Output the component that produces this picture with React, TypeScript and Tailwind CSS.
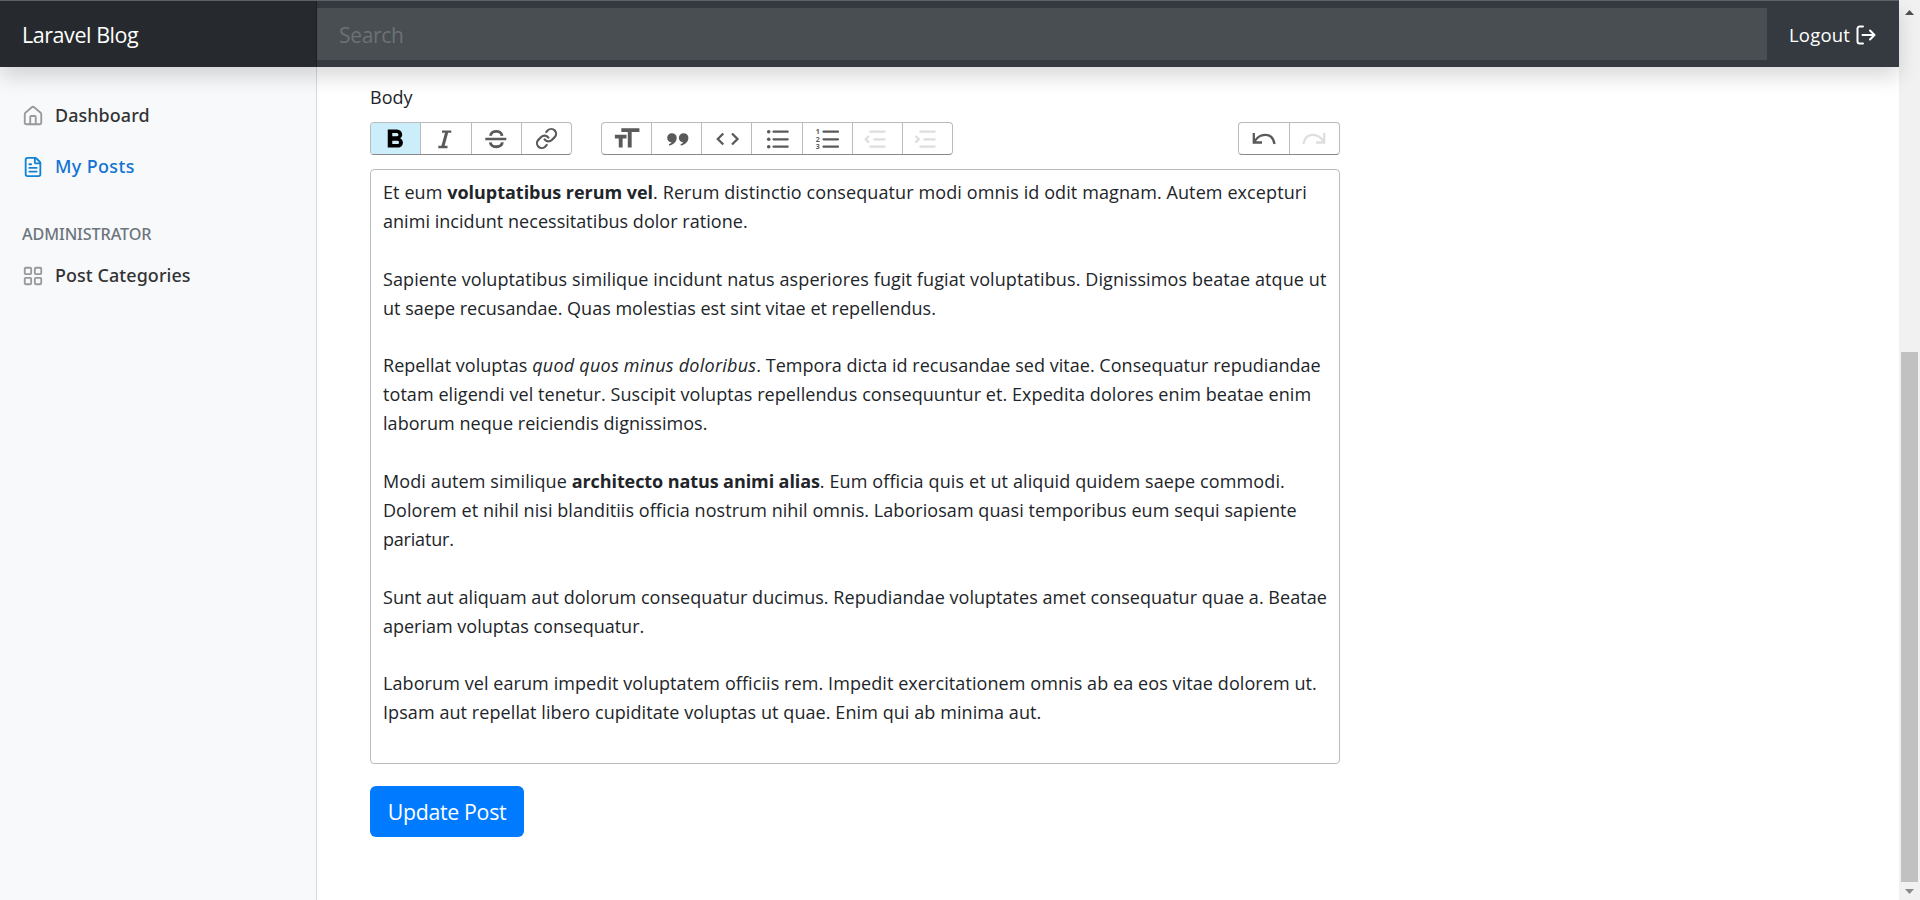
import React from "react";
import { House, FileText, LayoutGrid, Link } from "lucide-react";

const paragraphs: { text: React.ReactNode; cls: string }[][] = [
  [
    { text: <>Et eum <b className="tracking-[-0.03px]">voluptatibus rerum vel</b>. Rerum distinctio consequatur modi omnis id odit magnam. Autem excepturi</>, cls: "tracking-[0.1px]" },
    { text: "animi incidunt necessitatibus dolor ratione.", cls: "tracking-[0.04px]" },
  ],
  [
    { text: "Sapiente voluptatibus similique incidunt natus asperiores fugit fugiat voluptatibus. Dignissimos beatae atque ut", cls: "tracking-[0.1px]" },
    { text: "ut saepe recusandae. Quas molestias est sint vitae et repellendus.", cls: "tracking-[0.01px]" },
  ],
  [
    { text: <>Repellat voluptas <i className="tracking-[0.24px]">quod quos minus doloribus</i>. Tempora dicta id recusandae sed vitae. Consequatur repudiandae</>, cls: "tracking-[0.03px]" },
    { text: "totam eligendi vel tenetur. Suscipit voluptas repellendus consequuntur et. Expedita dolores enim beatae enim", cls: "tracking-[0.07px]" },
    { text: "laborum neque reiciendis dignissimos.", cls: "tracking-[0.05px]" },
  ],
  [
    { text: <>Modi autem similique <b className="tracking-[-0.09px]">architecto natus animi alias</b>. Eum officia quis et ut aliquid quidem saepe commodi.</>, cls: "tracking-[0.11px]" },
    { text: "Dolorem et nihil nisi blanditiis officia nostrum nihil omnis. Laboriosam quasi temporibus eum sequi sapiente", cls: "tracking-[0.057px]" },
    { text: "pariatur.", cls: "tracking-[-0.2px]" },
  ],
  [
    { text: "Sunt aut aliquam aut dolorum consequatur ducimus. Repudiandae voluptates amet consequatur quae a. Beatae", cls: "tracking-[0.04px]" },
    { text: "aperiam voluptas consequatur.", cls: "" },
  ],
  [
    { text: "Laborum vel earum impedit voluptatem officiis rem. Impedit exercitationem omnis ab ea eos vitae dolorem ut.", cls: "tracking-[0.083px]" },
    { text: "Ipsam aut repellat libero cupiditate voluptas ut quae. Enim qui ab minima aut.", cls: "tracking-[0.077px]" },
  ],
];

function Tool({ children, active, disabled }: { children: React.ReactNode; active?: boolean; disabled?: boolean }) {
  return (
    <button className={`flex h-full w-0 min-w-0 flex-1 items-center justify-center border-l border-[#bbb] first:border-l-0 ${active ? "bg-[#cbeefa] text-black" : disabled ? "text-[#dedede]" : "text-[#5a5a5a]"}`}>
      {children}
    </button>
  );
}

function Glyph({ children, w = 2.3 }: { children: React.ReactNode; w?: number }) {
  return (
    <svg viewBox="0 0 50 30" className="h-[30px] w-[50px] shrink-0" fill="none" stroke="currentColor" strokeWidth={w}>
      {children}
    </svg>
  );
}

const groupCls = "flex h-[33px] overflow-hidden rounded-[4px] border border-[#bbb] border-b-[#888] border-b-[1.5px]";

export default function App() {
  return (
    <div className="flex h-[900px] w-full overflow-hidden bg-white font-['Open_Sans','Noto_Sans',sans-serif] text-[#212529]">
      <div className="flex min-w-0 flex-1 flex-col">
        <header className="relative z-10 flex h-[67px] shrink-0 border-t border-[#5d6165] bg-[#343a40] shadow-[0_10px_19px_rgba(0,0,0,0.15)]">
          <div className="flex w-[317px] items-center bg-[#26292d] pl-[22px] pt-[2px] shadow-[inset_-1px_0_0_rgba(0,0,0,0.25)]">
            <span className="whitespace-nowrap text-[21.5px] text-white tracking-[-0.45px]">Laravel Blog</span>
          </div>
          <div className="mt-[7px] flex h-[52px] w-[1450px] items-center bg-[#494e52] pl-[22px] pt-[4px]">
            <span className="text-[21px] tracking-[-0.3px] text-[#6c7276]">Search</span>
          </div>
          <div className="flex flex-1 items-center gap-1.5 pl-[22px] pt-[2px] text-white">
            <span className="text-[18.5px] tracking-[0.2px]">Logout</span>
            <svg viewBox="0 0 20 20" className="h-5 w-5" fill="none" stroke="currentColor" strokeWidth="2" strokeLinecap="round" strokeLinejoin="round">
              <path d="M7 1.500H3.500a2 2 0 0 0-2 2v13a2 2 0 0 0 2 2H7M6.500 10H18.500M14 5.500l4.500 4.500-4.500 4.500" />
            </svg>
          </div>
        </header>
        <div className="flex min-h-0 flex-1">
          <nav className="flex w-[317px] shrink-0 flex-col bg-[#f8f9fa] pt-[23px] pl-[22px] font-['Noto_Sans','Open_Sans',sans-serif] text-[17.9px] tracking-[0.1px] font-medium shadow-[inset_-1px_0_0_#d9dadb]">
            <a className="flex h-[51px] items-center gap-[11px] text-[#333]">
              <House className="h-[22px] w-[22px] text-[#999]" strokeWidth={2} />
              <span>Dashboard</span>
            </a>
            <a className="flex h-[51px] items-center gap-[11px] text-[#1273d4]">
              <FileText className="h-[22px] w-[22px] text-[#1283d4]" strokeWidth={2} />
              <span className="tracking-[0.4px]">My Posts</span>
            </a>
            <h6 className="mt-[30px] flex h-[25px] items-center text-[16.2px] font-medium tracking-[-0.1px] text-[#6c757d]">ADMINISTRATOR</h6>
            <a className="mt-[3px] flex h-[51px] items-center gap-[11px] text-[#333]">
              <LayoutGrid className="h-[22px] w-[22px] text-[#999]" strokeWidth={2} />
              <span>Post Categories</span>
            </a>
          </nav>
          <main className="flex flex-1 flex-col items-start pt-[16px] pl-[53px]">
            <label className="text-[18px] leading-[28px]">Body</label>
            <div className="mt-[11px] flex w-[970px] justify-between">
              <div className="flex gap-[29px]">
                <div className={`${groupCls} w-[202px]`}>
                  <Tool active>
                    <svg viewBox="0 0 24 24" className="h-[31px] w-[31px] shrink-0" fill="currentColor">
                      <path d="M15.6 11.8c1-.7 1.6-1.800 1.600-2.800a4 4 0 0 0-4-4H6v14h8c2.100 0 3.700-1.700 3.700-3.800 0-1.500-.8-2.800-2.100-3.400zM9.500 7.700h3.500a1.300 1.300 0 1 1 0 2.600H9.500v-2.600zm4 8.600H9.500v-2.600h4a1.300 1.300 0 1 1 0 2.600z" />
                    </svg>
                  </Tool>
                  <Tool><Glyph w={3}><path d="M21 7.700H30.300M17.300 23H26.500" strokeWidth="2.300" /><path d="M25.900 7.500 21.700 23" /></Glyph></Tool>
                  <Tool><Glyph w={2.9}><path d="M14.300 15H35.300" strokeWidth="2.300" /><path d="M31 11.800C30.500 5.800 19.800 6 19.600 11.800M19.300 18.300C20 24.300 31.200 24.200 31.300 18.300" /></Glyph></Tool>
                  <Tool><Link className="h-[23px] w-[23px]" strokeWidth={2.300} /></Tool>
                </div>
                <div className={`${groupCls} w-[352px]`}>
                  <Tool>
                    <svg viewBox="0 0 24 24" className="h-[31px] w-[31px] shrink-0" fill="currentColor">
                      <path d="M12 9v3H9v7H6v-7H3V9h9zM8 4h14v3h-6v12h-3V7H8V4z" />
                    </svg>
                  </Tool>
                  <Tool>
                    <Glyph w={0}>
                      <g fill="currentColor">
                        <path d="M19.800 9.300a4.500 4.500 0 0 0-.3 9c-.5.9-1.300 1.500-2.500 1.800v1.500c4.700-.8 7.700-3.800 7.700-7.800 0-2.700-2-4.500-4.900-4.500z" />
                        <path d="M31.500 9.300a4.500 4.500 0 0 0-.3 9c-.5.9-1.300 1.500-2.500 1.800v1.500c4.700-.8 7.700-3.800 7.700-7.800 0-2.700-2-4.500-4.900-4.500z" />
                      </g>
                    </Glyph>
                  </Tool>
                  <Tool><Glyph><path d="M21.300 9.500 15.800 15l5.500 5.500M30 9.500l5.500 5.500-5.500 5.500" /></Glyph></Tool>
                  <Tool><Glyph w={2.200}><path d="M21.500 7.700H35.700M21.500 15.300H35.700M21.500 22.700H35.700" strokeLinecap="round" /><g fill="currentColor" stroke="none"><circle cx="16.700" cy="7.700" r="1.800" /><circle cx="16.700" cy="15.300" r="1.800" /><circle cx="16.700" cy="22.700" r="1.800" /></g></Glyph></Tool>
                  <Tool><Glyph w={2.200}><path d="M21.500 7.700H36M21.500 15.300H36M21.500 22.700H36" strokeLinecap="round" /><g className="text-[7px] font-bold" fill="currentColor" stroke="none"><text x="13.700" y="10.200">1</text><text x="13.700" y="17.800">2</text><text x="13.700" y="25.300">3</text></g></Glyph></Tool>
                  <Tool disabled><Glyph w={2.200}><path d="M17.500 7.700H33.500M21.500 15.300H33.500M17.500 22.700H33.500M17 12l-3.300 3.300 3.300 3.300" /></Glyph></Tool>
                  <Tool disabled><Glyph w={2.200}><path d="M17.500 7.700H33.500M21.500 15.300H33.500M17.500 22.700H33.500M13.500 12l3.300 3.300-3.300 3.300" /></Glyph></Tool>
                </div>
              </div>
              <div className={`${groupCls} w-[102px]`}>
                <Tool><Glyph w={2.300}><path d="M14.800 9v9.500H23M15.500 18C20 9 33.500 7.500 35.500 20" /></Glyph></Tool>
                <Tool disabled><Glyph w={2.300}><path d="M35.200 9v9.500H27M34.500 18C30 9 16.500 7.500 14.500 20" /></Glyph></Tool>
              </div>
            </div>
            <div className="mt-[14px] h-[595px] w-[970px] rounded-[4px] border border-[#bbb] px-[12px] pt-[8px] text-[18px] leading-[28.9px]">
              {paragraphs.map((lines, i) => (
                <div key={i} className="mb-[28.9px]">
                  {lines.map((line, j) => (
                    <div key={j} className="whitespace-nowrap"><span className={line.cls}>{line.text}</span></div>
                  ))}
                </div>
              ))}
            </div>
            <button className="mt-[22px] flex h-[51px] w-[154px] items-center justify-center rounded-[6px] bg-[#007bff] pt-[1px] text-[21.300px] tracking-[-0.3px] text-white"><span className="whitespace-nowrap">Update Post</span></button>
          </main>
        </div>
      </div>
      <div className="flex w-[21px] shrink-0 flex-col items-center bg-[#f1f1f1]">
        <svg viewBox="0 0 21 20" className="h-5 w-[21px]"><path d="M6 15h9l-4.500-5z" fill="#505050" /></svg>
        <div className="mt-[332px] h-[530px] w-[17px] bg-[#c1c1c1]" />
        <svg viewBox="0 0 21 18" className="h-[18px] w-[21px]"><path d="M6 7h9l-4.500 5z" fill="#8a8a8a" /></svg>
      </div>
    </div>
  );
}
